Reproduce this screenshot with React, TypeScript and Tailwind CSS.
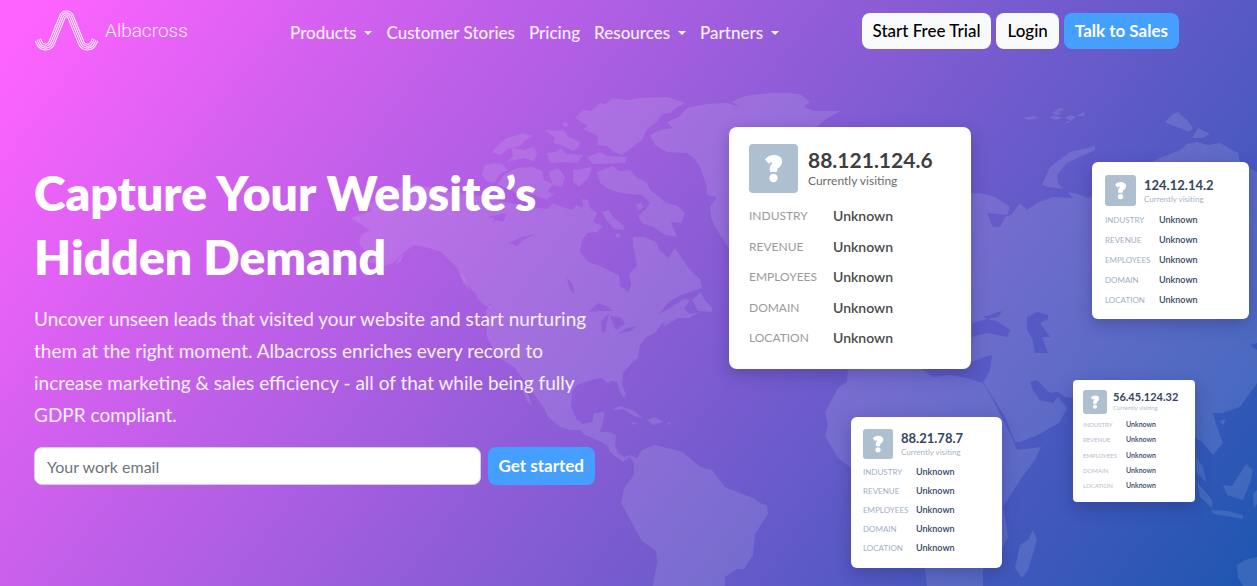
import React from 'react';
import clsx from 'clsx';

interface NavItem {
  label: string;
  hasMenu?: boolean;
}

interface Visitor {
  ip: string;
  size: 'xl' | 'lg' | 'md' | 'sm';
  place: string;
}

const navItems: NavItem[] = [
  { label: 'Products', hasMenu: true },
  { label: 'Customer Stories' },
  { label: 'Pricing' },
  { label: 'Resources', hasMenu: true },
  { label: 'Partners', hasMenu: true },
];

const visitors: Visitor[] = [
  { ip: '88.121.124.6', size: 'xl', place: 'left-[134px] top-16' },
  { ip: '124.12.14.2', size: 'lg', place: 'left-[497px] top-[99px]' },
  { ip: '88.21.78.7', size: 'md', place: 'left-64 top-[354px]' },
  { ip: '56.45.124.32', size: 'sm', place: 'left-[478px] top-[317px]' },
];

const fields = ['Industry', 'Revenue', 'Employees', 'Domain', 'Location'];

const cardSizes = {
  xl: {
    card: 'size-[242px] rounded-lg px-5 pt-[17px] pb-5 gap-3',
    head: 'gap-[10px]',
    icon: 'size-[49px] rounded-[4px]',
    ip: 'text-[21px] leading-6 text-[#3f3f3f]',
    status: 'text-xs leading-[18px] text-[#6b6b6b]',
    row: 'text-xs leading-[22px]',
    label: 'w-[84px] text-[#9b9b9b]',
    value: 'text-sm leading-[22px] text-[#4a4a4a]',
  },
  lg: {
    card: 'size-[157px] rounded-md p-[13px] gap-2',
    head: 'gap-2',
    icon: 'size-[31px] rounded-[3px]',
    ip: 'text-[13px] leading-4 text-[#344563]',
    status: 'text-[8px] leading-3 text-[#a9b3c2]',
    row: 'text-[8px] leading-3',
    label: 'w-[54px] text-[#a3afbf]',
    value: 'text-[9px] leading-3 text-[#344563]',
  },
  md: {
    card: 'size-[151px] rounded-md px-3 pt-3 pb-[14px] gap-[7px]',
    head: 'gap-2',
    icon: 'size-[30px] rounded-[3px]',
    ip: 'text-[13px] leading-4 text-[#344563]',
    status: 'text-[8px] leading-3 text-[#a9b3c2]',
    row: 'text-[8px] leading-3',
    label: 'w-[53px] text-[#a3afbf]',
    value: 'text-[9px] leading-3 text-[#344563]',
  },
  sm: {
    card: 'size-[122px] rounded-[4px] px-[10px] pt-[10px] pb-3 gap-[6px]',
    head: 'gap-[6px]',
    icon: 'size-[24px] rounded-[3px]',
    ip: 'text-[11px] leading-3 text-[#344563]',
    status: 'text-[6px] leading-[10px] text-[#b4bdc9]',
    row: 'text-[6px] leading-[9px]',
    label: 'w-[43px] text-[#b4bdc9]',
    value: 'text-[7px] leading-[9px] text-[#344563]',
  },
};

// Each strand is a bottom arc, a slanted run and a top arc, mirrored on the other side.
const strands = [
  [9.5, 1.5],
  [7.6, 3.4],
  [5.7, 5.3],
  [3.8, 7.2],
];

const strandPath = (low: number, high: number) => {
  const lx = 10.5;
  const ly = 30.5;
  const hx = 31.5;
  const hy = 8.2;
  const flip = (x: number) => 2 * hx - x;
  const x0 = lx - 0.9 * low;
  const y0 = ly + 0.43 * low;
  const x1 = lx + 0.926 * low;
  const y1 = ly + 0.378 * low;
  const x2 = hx - 0.926 * high;
  const y2 = hy - 0.378 * high;
  return [
    `M${x0 - 1.7} ${y0 - 3.6}L${x0} ${y0}`,
    `A${low} ${low} 0 0 0 ${x1} ${y1}L${x2} ${y2}`,
    `A${high} ${high} 0 0 1 ${flip(x2)} ${y2}L${flip(x1)} ${y1}`,
    `A${low} ${low} 0 0 0 ${flip(x0)} ${y0}L${flip(x0) + 1.7} ${y0 - 3.6}`,
  ].join('');
};

const Logo: React.FC = () => (
  <a href="#" className="flex items-center gap-[6px] w-[255px] shrink-0 text-white/90">
    <svg width="64" height="42" viewBox="0 0 64 42" fill="none" stroke="currentColor" strokeWidth="1.1" aria-hidden="true">
      {strands.map(([low, high]) => (
        <path key={low} d={strandPath(low, high)} />
      ))}
    </svg>
    <span className="font-[Roboto] font-light text-[19px] leading-6">Albacross</span>
  </a>
);

const WorldMap: React.FC = () => (
  <svg
    className="absolute inset-0 w-full h-full pointer-events-none"
    viewBox="0 0 1257 586"
    preserveAspectRatio="xMidYMin slice"
    fill="#dfe6f5"
    fillOpacity="0.13"
    fillRule="evenodd"
    aria-hidden="true"
  >
    {/* The Americas, with the large lakes cut out */}
    <path
      d="M351 218L362 214 372 211 368 205 380 197 398 188 415 184 440 190 462 194 480 196 495 200 512 203 530 207 548 209 553 203 560 206 572 210 576 205 583 208 582 199 588 200 590 208 597 213 593 222 603 226 597 232
      587 233 582 240 580 252 588 262 603 267 614 273 619 275 620 286 628 292 631 285 629 274 637 266 635 255 633 245 633 237 645 237 657 243 659 250 668 258 675 248 681 257 690 270 700 279 702 288 690 292 679 296 668 303 659 314
      670 308 684 299 690 300 684 309 690 314 700 312 689 318 678 318 665 326 663 322 655 333 646 337 640 345 638 358 632 363 623 373 622 385 626 394 624 398 620 392 617 382 612 381 607 383 602 378 588 381 577 385 572 392 571 407 577 420 583 424
      592 422 594 413 605 412 603 422 600 432 610 432 616 435 615 445 618 453 625 457 630 455 637 458 642 450 655 445 683 452 700 467 712 470 725 487 753 498 762 504 767 505 768 514 755 534 753 555 744 569 737 569 725 577 725 586 653 586
      657 563 656 551 642 541 632 523 621 503 624 488 634 475 634 463 630 457 623 462 610 452 607 445 597 440 585 435 580 430 571 430 560 427 548 417 544 408 531 390 524 380 514 367 498 357 487 337 486 310 491 305
      475 293 466 283 456 267 441 252 426 247 414 245 403 253 393 263 380 267 364 275 380 264 368 262 380 253 364 250 359 243 361 235 370 230Z
      M588 312L598 303 608 307 613 311 600 311Z M602 333L601 322 605 317 609 314 607 322 605 332Z M610 316L622 318 625 324 616 330 612 322Z M617 334L627 328 637 326 630 331Z
      M567 278L573 285 574 294 569 287Z M509 243L522 237 535 234 523 240 517 246Z M487 217L496 215 507 213 503 222 496 220 492 223 495 218Z"
    />
    <path d="M518 380l4 2 6 12 4 13-5-6z M400 257l4-4-3 8-6 4z M459 272l6 6 5 13-7-8z M475 294l12 7 5 8-10-5z" />
    {/* Arctic archipelago */}
    <path
      d="M575 118l8-8 8 1 9-8 6 1 7-6 14 2 13-2 27-1 18 6-9 5-6 5-8 1-5 8-10 7-5 11-12 9-8 6-8-3-7-6-10-1 1-9-15-7 5-3z
      M587 157l13-5 7 4 20 1-2 6-32 1z M492 152l8-9 7-5 16-5 10 3-9 5-4 5-12 3-8 6z M507 162l6-6-1-8 12 2 9-3 4 6-3 8-10-3z
      M545 130l11 1 7-1 6 7 11 5-2 6-5 3-12-6-8-2 2-5z M547 153l8-1 6-4 5 6 17 1-6 8-15-1-12 1z M563 123l4-1 1 4-4 1z
      M485 165l10-2 7 1 6 6-8 4-6 9-8-2-4-7z M497 184l8-10 12-6 15-1 10 4 2 9 9 4-5 7 6 3-7 6-13-5-16-1z
      M548 172l10-4 7 9-3 10-9-2z M573 170l19-3-3 10-10 10-6-5z
      M597 172L604 169 613 166 619 171 630 170 636 177 647 183 650 190 657 195 666 203 678 206 685 213 681 223 671 222 677 237 665 235 653 227 642 223 638 216 645 210 650 203 642 195 630 194 622 193 610 190 600 183Z
      M602 212l7-2 4 7 12 10-2 3-9-1-7-8z M692 300l9-8 3 7 8 9v4l-14-1z M636 204l6-1 1 5-5 2z M615 235l4-2 2 3-4 2z"
    />
    {/* Greenland */}
    <path d="M650 135L660 130 673 128 667 122 679 117 687 108 707 104 727 103 740 107 732 102 742 97 752 95 770 93 790 93 800 94 810 102 804 107 813 111 840 111 826 119 817 127 800 133 780 163 750 207 735 250 728 247 722 238 715 227 711 217 710 207 717 197 707 195 707 187 700 167 695 159 687 153 667 152 655 145Z" />
    {/* Caribbean */}
    <path d="M612 410l8-4 12 4 11 8-9-2-11-7-7 1z M647 420l8-3 8 5-10 3z M631 422l6 1-3 2z M667 422l5 1-4 2z" />
    {/* Africa and Madagascar */}
    <path d="M848 368L847 382 838 388 825 412 828 425 825 436 838 458 851 468 895 480 915 520 925 568 927 586 983 586 983 570 990 561 1003 547 1008 537 1007 527 1003 507 1020 480 1035 460 1041 447 1017 450 1013 440 1003 420 993 400 983 383 967 378 950 375 933 377 920 368Z M1015 568l5-23 8-5 5-10 4 10-9 30-6 8z" />
    {/* Eurasia, with the Black and Caspian seas cut out */}
    <path
      d="M940 200L972 193 985 194 997 198 1010 207 1007 215 987 213 993 227 1000 227 1005 217 1011 215 1020 203 1027 210 1037 203 1053 197 1073 198 1068 192 1078 194 1087 198 1120 190 1150 163 1160 158 1180 150 1187 144 1197 142 1208 145 1220 143 1238 153 1240 163 1257 172 1257 343
      1250 345 1257 350 1257 383 1240 407 1223 413 1213 413 1217 427 1223 443 1213 455 1203 443 1196 438 1140 420 1080 398 1073 398 1065 397 1058 392 1050 393 1037 380 1030 382 1033 390 1040 400 1053 403 1058 397 1067 408 1060 422 1040 434 1020 442 1015 442
      1005 417 983 382 986 378 990 370 992 355 985 357 971 362 940 355Z
      M972 323L987 319 997 321 1010 330 1007 337 987 333 972 337Z M983 317L1002 311 998 317 988 319Z M1027 317L1037 312 1048 315 1048 319 1040 323 1050 337 1042 337 1048 353 1035 353 1033 341 1027 329Z"
    />
    <path
      d="M1042 185l8-18 20-15 25-6v4l-28 13-10 12 1 8 5 6-14-2z M1165 122l8-8 5-2 4 4 5 4 6 8-4 4-7-3-13-5z M1192 138l6-10 12 6-8 4z
      M1022 118l11-2 6 2-10 2z M1052 113l8-5 4 1-5 3 2 2-5 1z M1048 117l8-1 6 2-6 2z M1065 118l6-3 5 2-5 4z M1076 116l9-4-1 4z M1064 122l5-1 1 2z
      M1196 457l7 10 3 15-9-9z M1197 482l15 18v8l-12-11z M1211 510l16 1 16 4v4l-29-5z M1223 485l9 1 14-22 7 6-3 13-7 17-16-5z
      M1220 421l6-2-3 6z M1257 490l-4 4 1 13 3-3z M1257 557l-12 3-8 5 1 12 5 9h14z"
    />
  </svg>
);

const QuestionMark: React.FC = () => (
  <svg className="size-full" viewBox="0 0 49 49" fill="#fff" aria-hidden="true">
    <path d="M16 15.500Q19 11 25.500 11Q33.200 11.500 33.200 17.500Q33 22 28.500 24.500L27.800 28H21Q20 23 22 21Q24.500 19 22.500 18.300Q21 18 20 20Z" />
    <circle cx="24.500" cy="34" r="4.200" />
  </svg>
);

const VisitorCard: React.FC<{ visitor: Visitor }> = ({ visitor }) => {
  const s = cardSizes[visitor.size];

  return (
    <article className={clsx('absolute flex flex-col bg-white shadow-[0_5px_16px_rgba(30,30,90,0.3)]', s.card, visitor.place)}>
      <div className={clsx('flex items-center', s.head)}>
        <div className={clsx('shrink-0 bg-[#aebfcf]', s.icon)}>
          <QuestionMark />
        </div>
        <div>
          <h2 className={clsx('font-bold', s.ip)}>{visitor.ip}</h2>
          <p className={s.status}>Currently visiting</p>
        </div>
      </div>
      <dl className="flex flex-1 flex-col justify-between">
        {fields.map((field) => (
          <div key={field} className={clsx('flex', s.row)}>
            <dt className={clsx('uppercase', s.label)}>{field}</dt>
            <dd className={clsx('font-semibold', s.value)}>Unknown</dd>
          </div>
        ))}
      </dl>
    </article>
  );
};

const Header: React.FC = () => (
  <header className="relative flex items-start pl-[35px] pr-[78px] pt-[10px] h-[63px]">
    <Logo />
    <nav className="flex flex-1 gap-[14px] pt-[11px] text-[17px] leading-6 font-medium text-white/90">
      {navItems.map((item) => (
        <a key={item.label} href="#" className="flex items-center gap-2 whitespace-nowrap">
          {item.label}
          {item.hasMenu && <span className="border-x-4 border-t-4 border-x-transparent border-t-white" />}
        </a>
      ))}
    </nav>
    <div className="flex gap-[5px] pt-[3px] text-[17px] whitespace-nowrap">
      <button className="h-9 px-[11px] rounded-lg bg-[#f8f9fa] text-black font-medium">Start Free Trial</button>
      <button className="h-9 px-[11px] rounded-lg bg-[#f8f9fa] text-black font-medium">Login</button>
      <button className="h-9 px-[11px] rounded-lg bg-[#449fff] text-white font-bold">Talk to Sales</button>
    </div>
  </header>
);

const App: React.FC = () => {
  return (
    <div className="relative min-h-screen overflow-hidden font-[Lato,sans-serif] bg-[linear-gradient(126deg,#ff63ff_2%,#1d56b0_100%)]">
      <WorldMap />
      <Header />
      <main className="relative flex">
        <section className="w-[595px] shrink-0 pl-[34px] pt-[98px] text-white">
          <h1 className="text-5xl leading-16 font-extrabold">
            Capture Your Website’s
            <br />
            Hidden Demand
          </h1>
          <p className="mt-[14px] text-[19px] leading-8 text-white/90">
            Uncover unseen leads that visited your website and start nurturing them at the right moment. Albacross
            enriches every record to increase marketing &amp; sales efficiency - all of that while being fully GDPR
            compliant.
          </p>
          <form className="mt-4 flex gap-[7px]" onSubmit={(e) => e.preventDefault()}>
            <input
              type="email"
              aria-label="Your work email"
              placeholder="Your work email"
              className="flex-1 min-w-0 h-[38px] px-3 rounded-lg border border-[#ced4da] bg-white text-base text-gray-800 placeholder-[#6c757d]"
            />
            <button className="h-[38px] px-[11px] rounded-lg bg-[#449fff] text-[17px] font-bold">Get started</button>
          </form>
        </section>
        <section className="relative flex-1 min-h-[523px]" aria-label="Unidentified visitors">
          {visitors.map((visitor) => (
            <VisitorCard key={visitor.ip} visitor={visitor} />
          ))}
        </section>
      </main>
    </div>
  );
};

export default App;
